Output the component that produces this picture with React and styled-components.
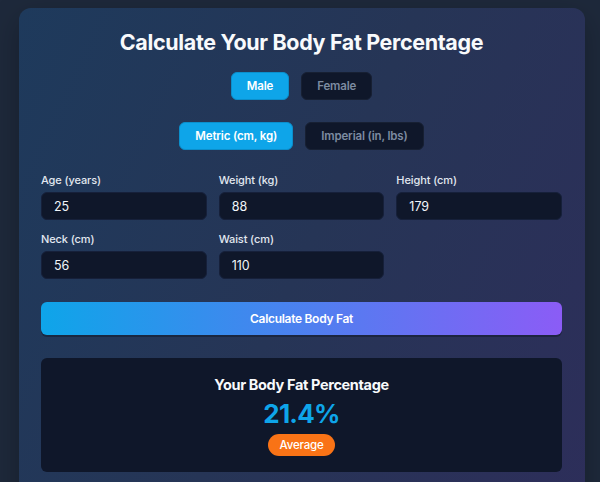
import React, { useState } from "react";
import styled, { createGlobalStyle } from "styled-components";

const Global = createGlobalStyle`
  html, body { margin: 0; padding: 0; background: #1e293b; }
  body { font-family: Inter, "Noto Sans", sans-serif; color: #f1f5f9; }
  * { box-sizing: border-box; }
`;

const Page = styled.div`
  padding: 8px 15px 0 19px;
  min-height: 482px;
`;

const Card = styled.div`
  background: linear-gradient(115deg, #1e3a5c 0%, #263556 50%, #2d2e5a 100%);
  border-radius: 12px;
  padding: 21px 23px 40px 22px;
  box-shadow: 0 10px 30px rgba(0, 0, 0, 0.25);
`;

const Title = styled.h1`
  margin: 0;
  text-align: center;
  font-family: Inter, "Noto Sans", sans-serif;
  font-size: 21.5px;
  line-height: 26px;
  font-weight: 700;
  color: #f8fafc;
  letter-spacing: -0.35px;
`;

const ToggleRow = styled.div`
  display: flex;
  justify-content: center;
  gap: 12px;
  margin-top: ${(p) => p.$mt}px;
`;

const Toggle = styled.button`
  height: 28px;
  padding: 0 15px;
  border-radius: 6px;
  border: 1px solid ${(p) => (p.$active ? "#0b8fcc" : "#172033")};
  background: ${(p) => (p.$active ? "#0ea5e9" : "#0f172a")};
  color: ${(p) => (p.$active ? "#ffffff" : "#7d8ba1")};
  font-family: Inter, sans-serif;
  font-size: 11.5px;
  font-weight: 600;
  letter-spacing: -0.15px;
  cursor: pointer;
`;

const Grid = styled.div`
  display: grid;
  grid-template-columns: repeat(3, 1fr);
  column-gap: 12px;
  row-gap: 11px;
  margin-top: 22px;
`;

const Field = styled.label`
  display: flex;
  flex-direction: column;
  gap: 4px;
`;

const Label = styled.span`
  font-size: 11px;
  line-height: 16px;
  font-weight: 500;
  color: #e2e8f0;
  letter-spacing: -0.1px;
`;

const Input = styled.input`
  height: 28px;
  border-radius: 6px;
  border: 1px solid #16203a;
  background: #0f172a;
  color: #f1f5f9;
  font-family: Inter, sans-serif;
  font-size: 12.5px;
  padding: 0 12px;
  outline: none;
  width: 100%;
`;

const CalcButton = styled.button`
  display: block;
  width: 100%;
  height: 33px;
  margin-top: 23px;
  border: none;
  border-radius: 6px;
  background: linear-gradient(90deg, #0ea5e9 0%, #8b5cf6 100%);
  color: #ffffff;
  font-family: Inter, sans-serif;
  font-size: 12px;
  font-weight: 600;
  letter-spacing: -0.3px;
  box-shadow: 0 2px 0 rgba(15, 23, 42, 0.5);
  cursor: pointer;
`;

const Result = styled.div`
  margin-top: 23px;
  background: #0f172a;
  border-radius: 6px;
  padding: 18px 16px 16px;
  display: flex;
  flex-direction: column;
  align-items: center;
`;

const ResultTitle = styled.h2`
  margin: 0;
  font-size: 14.5px;
  line-height: 18px;
  font-weight: 700;
  color: #f8fafc;
  letter-spacing: -0.35px;
`;

const ResultValue = styled.div`
  margin-top: 4px;
  font-size: 26px;
  line-height: 32px;
  font-weight: 700;
  color: #0ea5e9;
  letter-spacing: -0.8px;
`;

const Badge = styled.span`
  margin-top: 4px;
  height: 22px;
  padding: 0 12px;
  border-radius: 11px;
  background: #f97316;
  color: #ffffff;
  font-size: 11.5px;
  font-weight: 500;
  letter-spacing: -0.2px;
  display: inline-flex;
  align-items: center;
`;

const fields = [
  { label: "Age (years)", value: "25" },
  { label: "Weight (kg)", value: "88" },
  { label: "Height (cm)", value: "179" },
  { label: "Neck (cm)", value: "56" },
  { label: "Waist (cm)", value: "110" },
];

export default function App() {
  const [gender, setGender] = useState("male");
  const [unit, setUnit] = useState("metric");
  return (
    <>
      <Global />
      <Page>
        <Card>
          <Title>Calculate Your Body Fat Percentage</Title>
          <ToggleRow $mt={17}>
            <Toggle $active={gender === "male"} onClick={() => setGender("male")}>Male</Toggle>
            <Toggle $active={gender === "female"} onClick={() => setGender("female")}>Female</Toggle>
          </ToggleRow>
          <ToggleRow $mt={22}>
            <Toggle $active={unit === "metric"} onClick={() => setUnit("metric")}>Metric (cm, kg)</Toggle>
            <Toggle $active={unit === "imperial"} onClick={() => setUnit("imperial")}>Imperial (in, lbs)</Toggle>
          </ToggleRow>
          <Grid>
            {fields.map((f) => (
              <Field key={f.label}>
                <Label>{f.label}</Label>
                <Input defaultValue={f.value} />
              </Field>
            ))}
          </Grid>
          <CalcButton>Calculate Body Fat</CalcButton>
          <Result>
            <ResultTitle>Your Body Fat Percentage</ResultTitle>
            <ResultValue>21.4%</ResultValue>
            <Badge>Average</Badge>
          </Result>
        </Card>
      </Page>
    </>
  );
}
